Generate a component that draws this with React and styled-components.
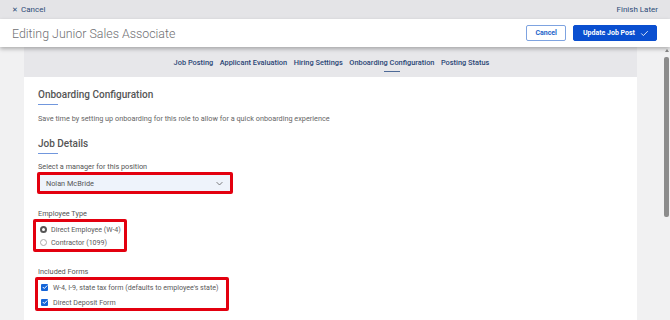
import React from 'react';
import styled, { createGlobalStyle } from 'styled-components';

const GlobalStyle = createGlobalStyle`
    html, body {
        margin: 0;
        padding: 0;
        background: #f1f1f2;
        font-family: Roboto, "Liberation Sans", Arial, sans-serif;
    }
    * { box-sizing: border-box; }
`;

const tabs = [
    "Job Posting",
    "Applicant Evaluation",
    "Hiring Settings",
    "Onboarding Configuration",
    "Posting Status",
];

const CheckMark = () => (
    <svg width="6" height="6" viewBox="0 0 24 24" fill="none" stroke="#fff" strokeWidth="4" strokeLinecap="round" strokeLinejoin="round">
        <path d="M4 13l5 5L20 7" />
    </svg>
);

const App = () => {
    return (
        <React.Fragment>
            <GlobalStyle />
            <Page>
                <TopBar>
                    <TopLink>
                        <span className="x">✕</span> Cancel
                    </TopLink>
                    <TopLink>Finish Later</TopLink>
                </TopBar>
                <Header>
                    <Title>Editing Junior Sales Associate</Title>
                    <Actions>
                        <Button>Cancel</Button>
                        <Button primary>
                            Update Job Post
                            <svg width="9" height="9" viewBox="0 0 24 24" fill="none" stroke="#fff" strokeWidth="2.2" strokeLinecap="round" strokeLinejoin="round">
                                <path d="M4 12.5l5 5L20 6.5" />
                            </svg>
                        </Button>
                    </Actions>
                </Header>
                <Body>
                    <Panel>
                        <TabBar>
                            { tabs.map(t => (
                                <Tab key={ t } active={ t === "Onboarding Configuration" }>{ t }</Tab>
                            )) }
                        </TabBar>
                        <Content>
                            <SectionTitle>Onboarding Configuration</SectionTitle>
                            <Description>Save time by setting up onboarding for this role to allow for a quick onboarding experience</Description>
                            <SectionTitle>Job Details</SectionTitle>

                            <FieldLabel>Select a manager for this position</FieldLabel>
                            <Highlight width="196px">
                                <Select>
                                    <span>Nolan McBride</span>
                                    <svg width="9" height="9" viewBox="0 0 24 24" fill="none" stroke="#555" strokeWidth="2" strokeLinecap="round" strokeLinejoin="round">
                                        <path d="M5 9l7 7 7-7" />
                                    </svg>
                                </Select>
                            </Highlight>

                            <FieldLabel top="15px">Employee Type</FieldLabel>
                            <Highlight width="94px" shift="-5px">
                                <OptionList>
                                    <Option>
                                        <Radio checked />
                                        Direct Employee (W-4)
                                    </Option>
                                    <Option>
                                        <Radio />
                                        Contractor (1099)
                                    </Option>
                                </OptionList>
                            </Highlight>

                            <FieldLabel top="15px">Included Forms</FieldLabel>
                            <Highlight width="194px" shift="-3px">
                                <OptionList check>
                                    <Option>
                                        <Checkbox><CheckMark /></Checkbox>
                                        W-4, I-9, state tax form (defaults to employee's state)
                                    </Option>
                                    <Option>
                                        <Checkbox><CheckMark /></Checkbox>
                                        Direct Deposit Form
                                    </Option>
                                </OptionList>
                            </Highlight>
                        </Content>
                    </Panel>
                    <ScrollTrack>
                        <ScrollArrow />
                        <ScrollThumb />
                    </ScrollTrack>
                </Body>
            </Page>
        </React.Fragment>
    );
};

export default App;

const Page = styled.div`
    display: flex;
    flex-direction: column;
    height: 100vh;
    overflow: hidden;
`;

const TopBar = styled.div`
    height: 19px;
    flex-shrink: 0;
    display: flex;
    align-items: center;
    justify-content: space-between;
    padding: 0 12px 0 12px;
    background: #e4e4e7;
`;

const TopLink = styled.div`
    font-size: 8px;
    color: #2d4b78;
    .x {
        font-size: 7px;
        margin-right: 1px;
    }
`;

const Header = styled.div`
    height: 28px;
    flex-shrink: 0;
    display: flex;
    align-items: center;
    justify-content: space-between;
    padding: 0 13px 0 12px;
    background: #fff;
    box-shadow: 0 2px 4px rgba(0, 0, 0, 0.28);
    position: relative;
    z-index: 2;
`;

const Title = styled.div`
    font-size: 12.4px;
    font-weight: 300;
    color: #6f6f73;
`;

const Actions = styled.div`
    display: flex;
    gap: 7px;
`;

const Button = styled.button`
    height: 16px;
    display: flex;
    align-items: center;
    gap: 5px;
    font-family: inherit;
    font-size: 7px;
    font-weight: 700;
    border-radius: 2px;
    border: 1px solid ${props => props.primary ? "#0a4fd0" : "#7ea3e0"};
    background: ${props => props.primary ? "#0a4fd0" : "#fff"};
    color: ${props => props.primary ? "#fff" : "#2563c9"};
    padding: ${props => props.primary ? "0 7px 0 9px" : "0 8px"};
`;

const Body = styled.div`
    flex: 1;
    display: flex;
    min-height: 0;
    padding-left: 24px;
`;

const Panel = styled.div`
    width: 613px;
    display: flex;
    flex-direction: column;
    background: #fff;
    margin-right: 26px;
`;

const TabBar = styled.div`
    height: 30px;
    flex-shrink: 0;
    display: flex;
    justify-content: center;
    align-items: center;
    gap: 6.5px;
    background: #e7e7ea;
    padding-left: 2px;
`;

const Tab = styled.div`
    position: relative;
    font-size: 7.4px;
    font-weight: 500;
    color: #2a4675;
    &::after {
        content: "";
        display: ${props => props.active ? "block" : "none"};
        position: absolute;
        left: 50%;
        bottom: -5px;
        width: 16px;
        height: 1px;
        margin-left: -8px;
        background: #4e6a97;
    }
`;

const Content = styled.div`
    flex: 1;
    padding: 12px 14px 0 14px;
    display: flex;
    flex-direction: column;
    align-items: flex-start;
`;

const SectionTitle = styled.div`
    font-size: 10px;
    font-weight: 500;
    color: #555;
    padding-bottom: 5px;
    position: relative;
    &::after {
        content: "";
        position: absolute;
        left: 0;
        bottom: 0;
        width: 20px;
        height: 1.5px;
        background: #7197dd;
    }
`;

const Description = styled.div`
    font-size: 7.3px;
    color: #666;
    margin: 9px 0 15px 0;
`;

const FieldLabel = styled.div`
    font-size: 7.3px;
    color: #555;
    margin-top: ${props => props.top || "8px"};
    margin-bottom: 1px;
`;

const Highlight = styled.div`
    width: ${props => props.width};
    margin-left: ${props => props.shift || "-1px"};
    border: 3px solid #e3000f;
    border-radius: 2px;
    background: #fff;
`;

const Select = styled.div`
    height: 16px;
    display: flex;
    align-items: center;
    justify-content: space-between;
    padding: 0 6px 0 6px;
    background: #eef3fb;
    font-size: 7.3px;
    color: #555;
`;

const OptionList = styled.div`
    display: flex;
    flex-direction: column;
    gap: ${props => props.check ? "5px" : "3px"};
    padding: ${props => props.check ? "2px 3px 1px 3px" : "2px 4px 2px 4px"};
`;

const Option = styled.div`
    display: flex;
    align-items: center;
    gap: 4px;
    height: 10px;
    font-size: 7.1px;
    color: #5a5a5a;
    white-space: nowrap;
`;

const Radio = styled.span`
    width: 7px;
    height: 7px;
    border-radius: 50%;
    flex-shrink: 0;
    border: ${props => props.checked ? "2px solid #555" : "1px solid #aaa"};
    background: #fff;
`;

const Checkbox = styled.span`
    width: 7px;
    height: 7px;
    flex-shrink: 0;
    border-radius: 1px;
    background: #1565d8;
    display: flex;
    align-items: center;
    justify-content: center;
    margin-right: 1px;
`;

const ScrollTrack = styled.div`
    width: 7px;
    display: flex;
    flex-direction: column;
    align-items: center;
    padding-top: 2px;
    background: #f1f1f2;
`;

const ScrollArrow = styled.div`
    width: 0;
    height: 0;
    border-left: 2.5px solid transparent;
    border-right: 2.5px solid transparent;
    border-bottom: 3px solid #888;
    margin-bottom: 5px;
`;

const ScrollThumb = styled.div`
    width: 5px;
    height: 160px;
    border-radius: 2px;
    background: #8c8c8c;
`;
